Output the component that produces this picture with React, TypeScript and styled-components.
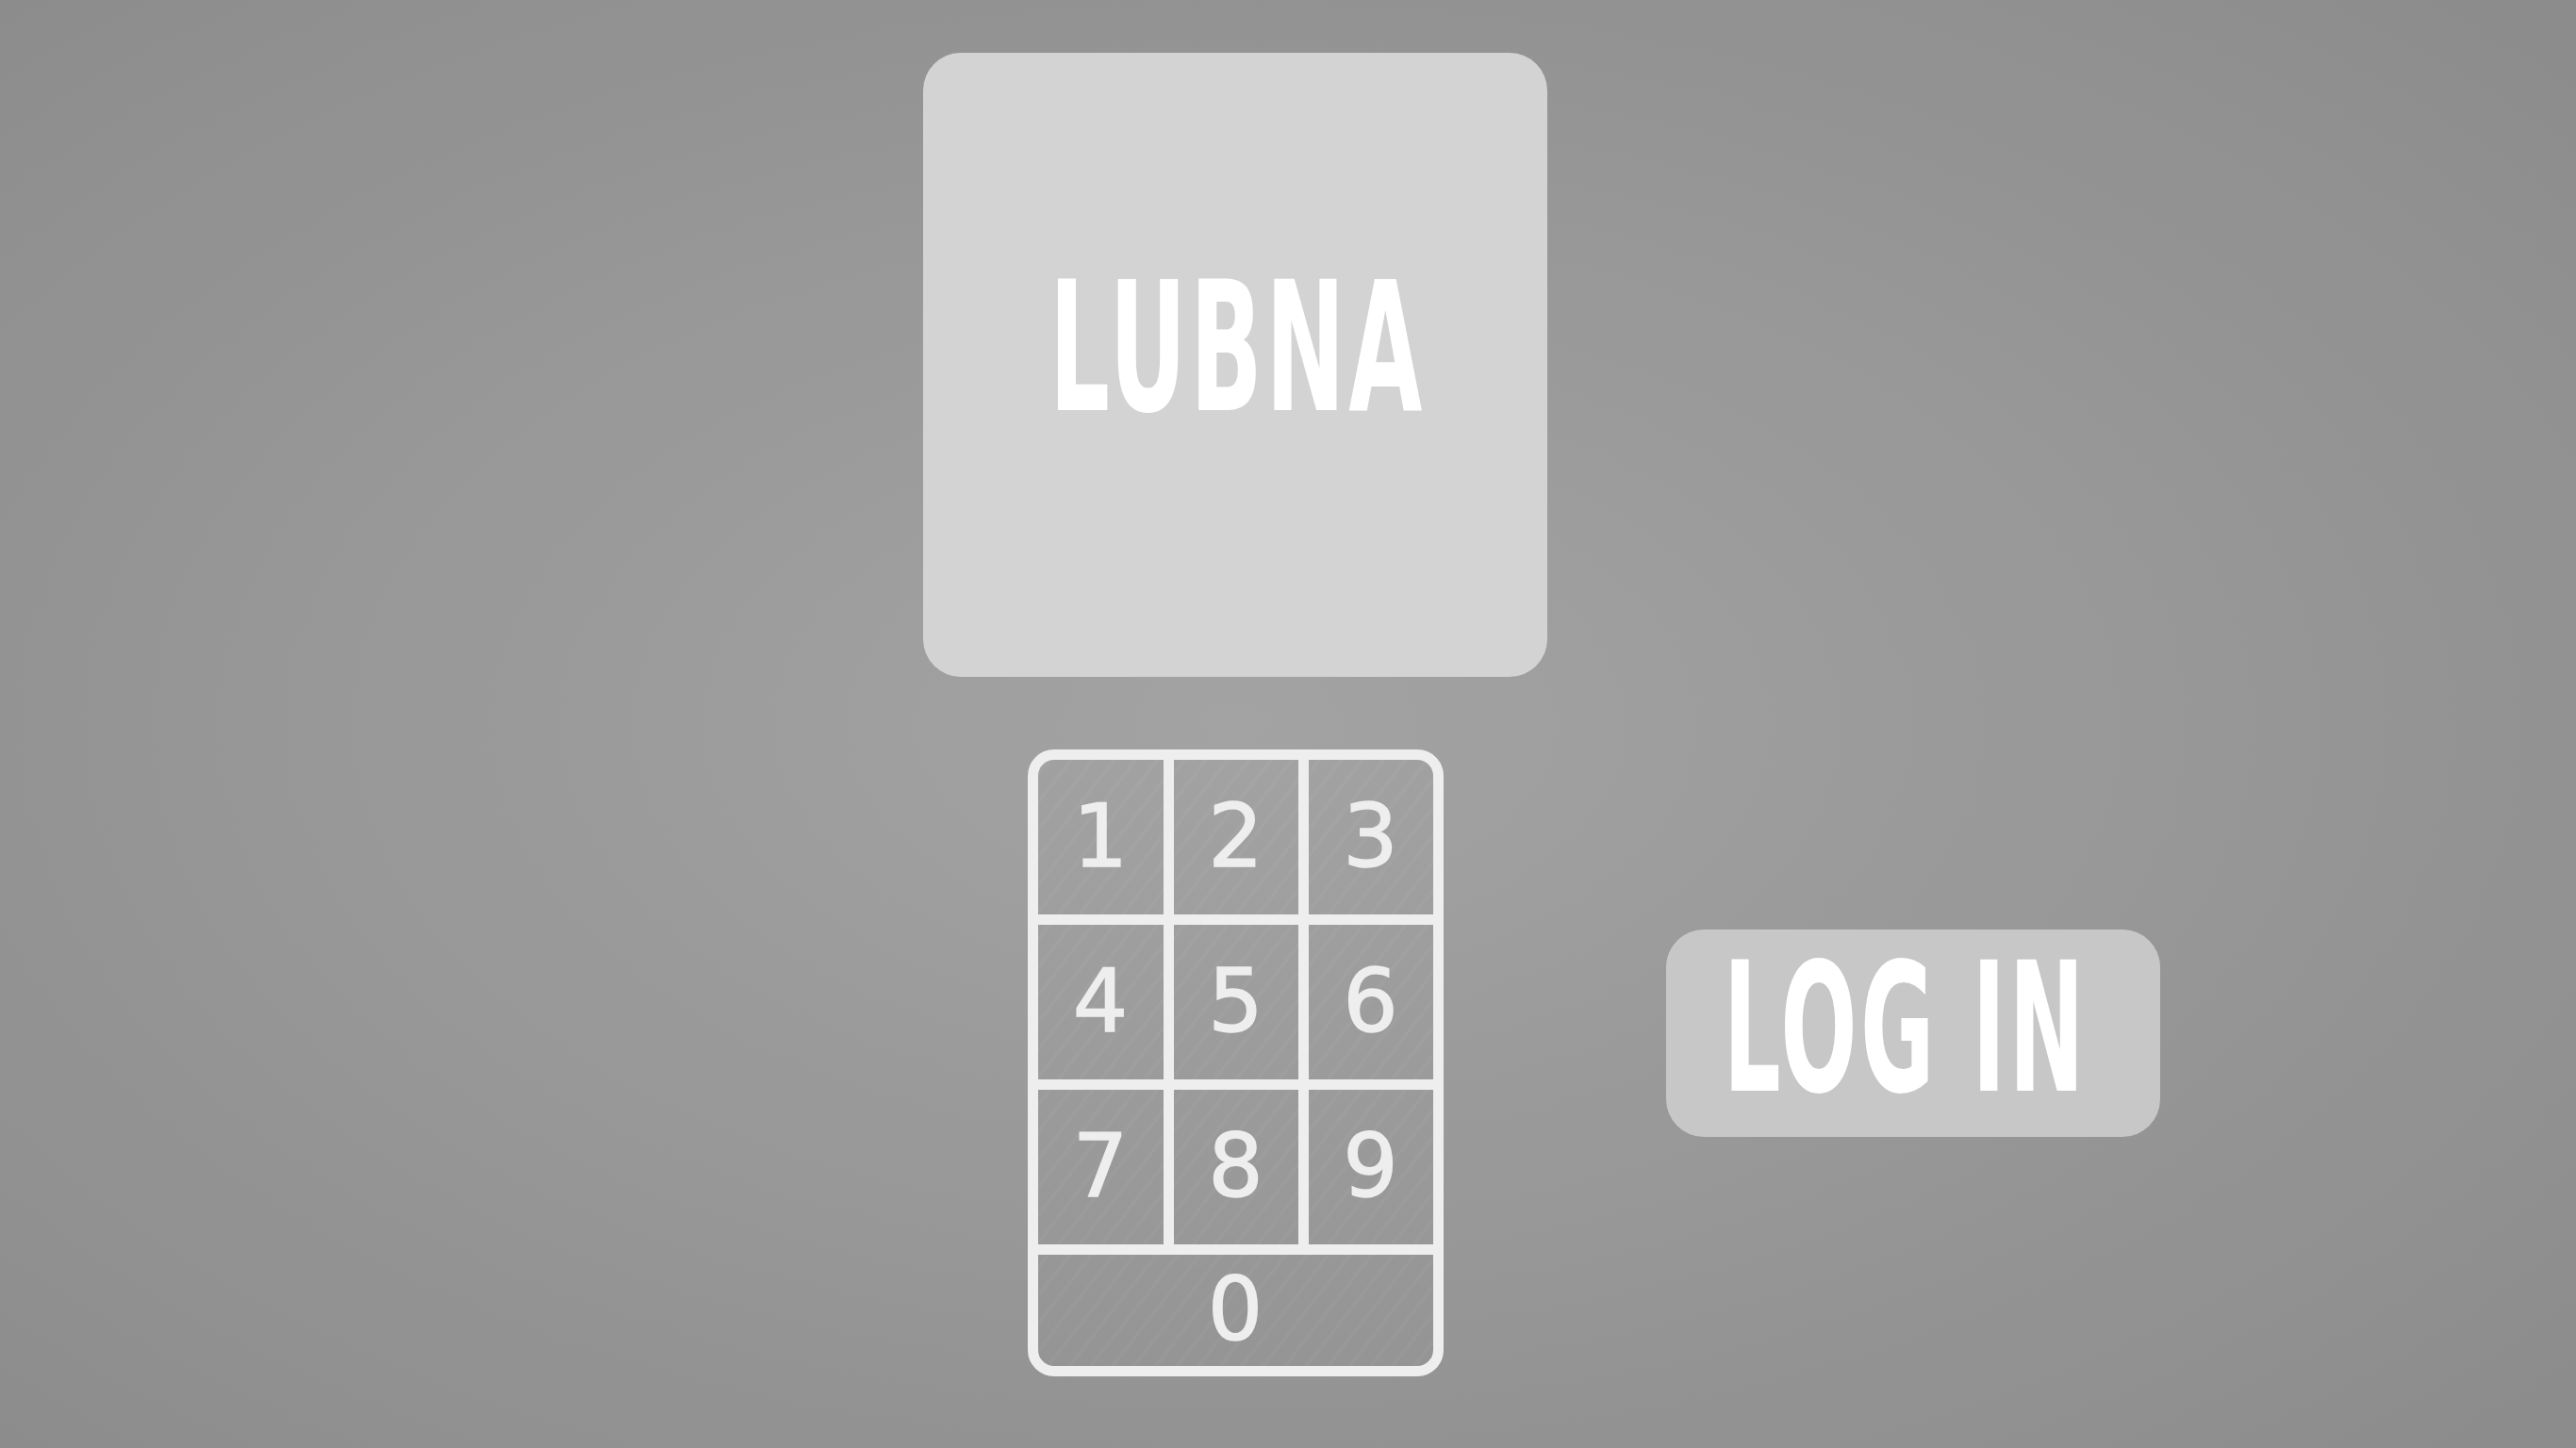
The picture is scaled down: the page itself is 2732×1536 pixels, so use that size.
import React from "react";
import styled, { createGlobalStyle } from "styled-components";

const Global = createGlobalStyle`
  html, body { margin: 0; padding: 0; }
  body { font-family: "Liberation Sans", Arial, sans-serif; }
`;

const Page = styled.div`
  width: 100%;
  min-height: 100vh;
  box-sizing: border-box;
  padding-top: 56px;
  background: radial-gradient(ellipse 70% 70% at 48% 50%, #a3a3a3 0%, #999999 45%, #8c8c8c 100%);
  display: grid;
  grid-template-columns: 979px 662px 1fr;
  grid-template-rows: 662px auto;
  align-items: start;
  row-gap: 77px;
  overflow: hidden;
`;

const NameCard = styled.div`
  grid-column: 2;
  grid-row: 1;
  width: 662px;
  height: 662px;
  border-radius: 40px;
  background: #d3d3d3;
  display: flex;
  align-items: center;
  justify-content: center;
  padding-bottom: 34px;
  padding-left: 4px;
  box-sizing: border-box;
`;

const BigLabel = styled.span<{ $scale: number }>`
  font-family: "Liberation Sans Narrow", "DejaVu Sans Condensed", "Liberation Sans", sans-serif;
  font-weight: 700;
  font-size: 190px;
  line-height: 1;
  color: #ffffff;
  letter-spacing: 6px;
  display: inline-block;
  transform: scaleX(${(p) => p.$scale});
  white-space: nowrap;
`;

const Keypad = styled.div`
  grid-column: 2;
  grid-row: 2;
  justify-self: center;
  align-self: start;
  width: 441px;
  height: 665px;
  box-sizing: border-box;
  border: 11px solid #eeeeee;
  border-radius: 28px;
  overflow: hidden;
  display: grid;
  grid-template-columns: 144px 143px 132px;
  grid-template-rows: 175px 175px 175px 118px;
`;

const Key = styled.button<{ $right?: boolean; $bottom?: boolean; $wide?: boolean }>`
  all: unset;
  box-sizing: border-box;
  display: flex;
  align-items: center;
  justify-content: center;
  grid-column: ${(p) => (p.$wide ? "1 / span 3" : "auto")};
  border-right: ${(p) => (p.$right ? "11px solid #eeeeee" : "none")};
  border-bottom: ${(p) => (p.$bottom ? "11px solid #eeeeee" : "none")};
  background: repeating-linear-gradient(
    -52deg,
    rgba(255, 255, 255, 0) 0px,
    rgba(255, 255, 255, 0) 14px,
    rgba(255, 255, 255, 0.03) 14px,
    rgba(255, 255, 255, 0.03) 18px
  );
  font-family: "DejaVu Sans", "Liberation Sans", sans-serif;
  font-size: 92px;
  line-height: 1;
  color: #eeeeee;
  -webkit-text-stroke: 1.5px #eeeeee;
  cursor: pointer;
`;

const Side = styled.div`
  grid-column: 3;
  grid-row: 2;
  padding-left: 126px;
  padding-top: 191px;
`;

const LoginButton = styled.button`
  all: unset;
  box-sizing: border-box;
  width: 524px;
  height: 220px;
  border-radius: 40px;
  background: #c7c7c7;
  display: flex;
  align-items: center;
  justify-content: center;
  padding-bottom: 8px;
  padding-right: 16px;
  cursor: pointer;
`;

const keys = ["1", "2", "3", "4", "5", "6", "7", "8", "9"];

export default function App() {
  return (
    <>
      <Global />
      <Page>
        <NameCard>
          <BigLabel $scale={0.59}>LUBNA</BigLabel>
        </NameCard>
        <Keypad>
          {keys.map((k, i) => (
            <Key key={k} $right={i % 3 !== 2} $bottom>
              {k}
            </Key>
          ))}
          <Key $wide>0</Key>
        </Keypad>
        <Side>
          <LoginButton>
            <BigLabel $scale={0.56}>LOG IN</BigLabel>
          </LoginButton>
        </Side>
      </Page>
    </>
  );
}
